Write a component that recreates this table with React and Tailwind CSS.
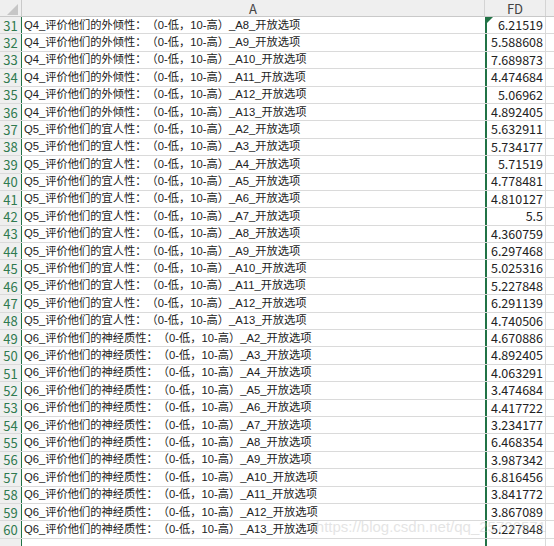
import React from "react";

const rows = [
  [31, "Q4_评价他们的外倾性：（0-低，10-高）_A8_开放选项", "6.21519"],
  [32, "Q4_评价他们的外倾性：（0-低，10-高）_A9_开放选项", "5.588608"],
  [33, "Q4_评价他们的外倾性：（0-低，10-高）_A10_开放选项", "7.689873"],
  [34, "Q4_评价他们的外倾性：（0-低，10-高）_A11_开放选项", "4.474684"],
  [35, "Q4_评价他们的外倾性：（0-低，10-高）_A12_开放选项", "5.06962"],
  [36, "Q4_评价他们的外倾性：（0-低，10-高）_A13_开放选项", "4.892405"],
  [37, "Q5_评价他们的宜人性：（0-低，10-高）_A2_开放选项", "5.632911"],
  [38, "Q5_评价他们的宜人性：（0-低，10-高）_A3_开放选项", "5.734177"],
  [39, "Q5_评价他们的宜人性：（0-低，10-高）_A4_开放选项", "5.71519"],
  [40, "Q5_评价他们的宜人性：（0-低，10-高）_A5_开放选项", "4.778481"],
  [41, "Q5_评价他们的宜人性：（0-低，10-高）_A6_开放选项", "4.810127"],
  [42, "Q5_评价他们的宜人性：（0-低，10-高）_A7_开放选项", "5.5"],
  [43, "Q5_评价他们的宜人性：（0-低，10-高）_A8_开放选项", "4.360759"],
  [44, "Q5_评价他们的宜人性：（0-低，10-高）_A9_开放选项", "6.297468"],
  [45, "Q5_评价他们的宜人性：（0-低，10-高）_A10_开放选项", "5.025316"],
  [46, "Q5_评价他们的宜人性：（0-低，10-高）_A11_开放选项", "5.227848"],
  [47, "Q5_评价他们的宜人性：（0-低，10-高）_A12_开放选项", "6.291139"],
  [48, "Q5_评价他们的宜人性：（0-低，10-高）_A13_开放选项", "4.740506"],
  [49, "Q6_评价他们的神经质性：（0-低，10-高）_A2_开放选项", "4.670886"],
  [50, "Q6_评价他们的神经质性：（0-低，10-高）_A3_开放选项", "4.892405"],
  [51, "Q6_评价他们的神经质性：（0-低，10-高）_A4_开放选项", "4.063291"],
  [52, "Q6_评价他们的神经质性：（0-低，10-高）_A5_开放选项", "3.474684"],
  [53, "Q6_评价他们的神经质性：（0-低，10-高）_A6_开放选项", "4.417722"],
  [54, "Q6_评价他们的神经质性：（0-低，10-高）_A7_开放选项", "3.234177"],
  [55, "Q6_评价他们的神经质性：（0-低，10-高）_A8_开放选项", "6.468354"],
  [56, "Q6_评价他们的神经质性：（0-低，10-高）_A9_开放选项", "3.987342"],
  [57, "Q6_评价他们的神经质性：（0-低，10-高）_A10_开放选项", "6.816456"],
  [58, "Q6_评价他们的神经质性：（0-低，10-高）_A11_开放选项", "3.841772"],
  [59, "Q6_评价他们的神经质性：（0-低，10-高）_A12_开放选项", "3.867089"],
  [60, "Q6_评价他们的神经质性：（0-低，10-高）_A13_开放选项", "5.227848"],
];

const labelFont = { fontFamily: '"Liberation Sans", "Noto Sans CJK SC", sans-serif' };

const App = () => {
  return (
    <div
      className="relative w-[554px] h-[546px] overflow-hidden bg-white text-[#222]"
      style={{ fontFamily: '"Noto Sans CJK SC", "Liberation Sans", sans-serif' }}
    >
      {/* column headers */}
      <div className="flex h-[17px] bg-[#efefef] border-b border-[#c9c9c9]">
        <div className="w-[22px] shrink-0 border-r border-[#c9c9c9] flex items-end justify-end pr-[3px] pb-[1px]">
          <svg width="11" height="11" viewBox="0 0 11 11">
            <polygon points="11,0 11,11 0,11" fill="#c6c6c6" />
          </svg>
        </div>
        <div className="w-[463px] shrink-0 border-r border-[#d4d4d4] flex items-center justify-center text-[13px] text-[#444] leading-none">
          A
        </div>
        <div className="w-[61px] shrink-0 border-r border-[#d4d4d4] flex items-center justify-center text-[13px] text-[#444] leading-none">
          FD
        </div>
        <div className="flex-1" />
      </div>

      {/* rows */}
      {rows.map(([num, label, value], idx) => (
        <div key={num} className="flex h-[17.4px] border-b border-[#dadada]">
          <div className="w-[22px] shrink-0 bg-[#efefef] border-r border-[#217346] flex items-center justify-center text-[13px] text-[#2f7a50] leading-none">
            {num}
          </div>
          <div
            className="w-[463px] shrink-0 flex items-center pl-[2px] text-[11.25px] leading-none whitespace-nowrap overflow-hidden [text-spacing-trim:space-all]"
            style={labelFont}
          >
            {label}
          </div>
          <div className="relative w-[61px] shrink-0 border-l-2 border-r border-l-[#217346] border-r-[#dadada] flex items-center justify-end pr-[2px] text-[12.5px] leading-none">
            {idx === 0 && (
              <svg className="absolute left-0 top-0" width="6" height="6" viewBox="0 0 6 6">
                <polygon points="0,0 6,0 0,6" fill="#217346" />
              </svg>
            )}
            {value}
          </div>
          <div className="flex-1" />
        </div>
      ))}

      {/* partial next row */}
      <div className="flex h-[17.4px]">
        <div className="w-[22px] shrink-0 bg-[#efefef] border-r border-[#217346]" />
        <div className="w-[463px] shrink-0" />
        <div className="w-[61px] shrink-0 border-l-2 border-r border-l-[#217346] border-r-[#dadada]" />
      </div>

      {/* watermark */}
      <span
        className="absolute right-[8px] bottom-[8px] text-[15px] text-[#bdbdbd] opacity-40 whitespace-nowrap pointer-events-none"
        style={{ fontFamily: '"Liberation Sans", sans-serif' }}
      >
        https://blog.csdn.net/qq_25700571
      </span>
    </div>
  );
};

export default App;
